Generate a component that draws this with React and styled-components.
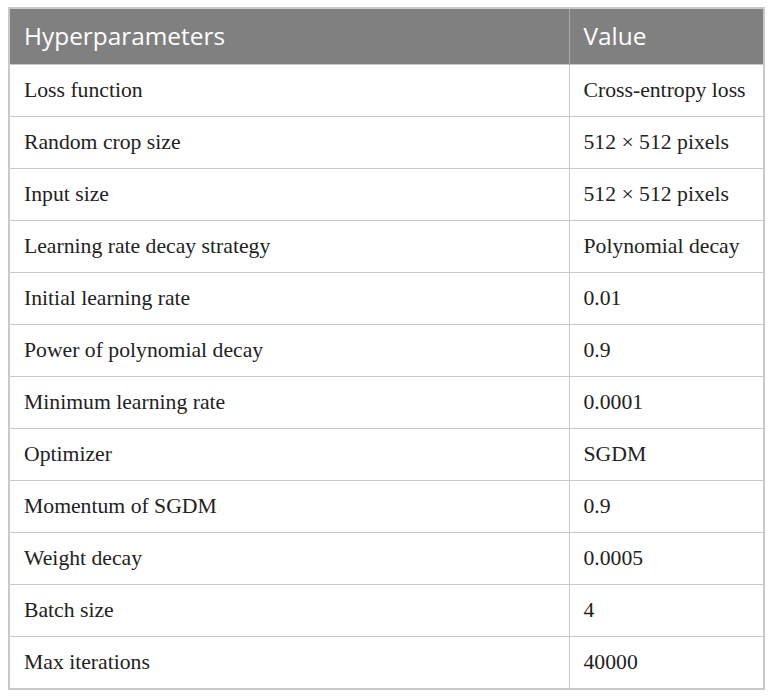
import React from "react";
import styled, { createGlobalStyle } from "styled-components";

const rows = [
  ["Loss function", "Cross-entropy loss"],
  ["Random crop size", "512 \u00d7 512 pixels"],
  ["Input size", "512 \u00d7 512 pixels"],
  ["Learning rate decay strategy", "Polynomial decay"],
  ["Initial learning rate", "0.01"],
  ["Power of polynomial decay", "0.9"],
  ["Minimum learning rate", "0.0001"],
  ["Optimizer", "SGDM"],
  ["Momentum of SGDM", "0.9"],
  ["Weight decay", "0.0005"],
  ["Batch size", "4"],
  ["Max iterations", "40000"],
];

export default function App() {
  return (
    <>
      <GlobalStyle />
      <Table>
        <colgroup>
          <col style={{ width: 560 }} />
          <col />
        </colgroup>
        <thead>
          <tr>
            <HeadCell>Hyperparameters</HeadCell>
            <HeadCell>Value</HeadCell>
          </tr>
        </thead>
        <tbody>
          {rows.map(([name, value]) => (
            <tr key={name}>
              <Cell>{name}</Cell>
              <Cell>{value}</Cell>
            </tr>
          ))}
        </tbody>
      </Table>
    </>
  );
}

const GlobalStyle = createGlobalStyle`
  html, body {
    margin: 0;
    background: #ffffff;
  }
  body {
    padding: 7px 8px;
  }
`;

const Table = styled.table`
  width: 757px;
  border-collapse: collapse;
  table-layout: fixed;
  border: 2px solid #c9c9c9;
`;

const HeadCell = styled.th`
  box-sizing: border-box;
  height: 56px;
  padding: 0 0 2px 14px;
  background: #808080;
  color: #ffffff;
  font-family: "Open Sans", sans-serif;
  font-weight: 400;
  font-size: 24.4px;
  text-align: left;
  border-left: 1px solid #a8a8a8;
  &:first-child {
    border-left: none;
  }
`;

const Cell = styled.td`
  height: 51px;
  padding: 0 0 0 14px;
  font-family: "Liberation Serif", serif;
  font-size: 21.7px;
  color: #222222;
  border: 1px solid #c9c9c9;
`;
